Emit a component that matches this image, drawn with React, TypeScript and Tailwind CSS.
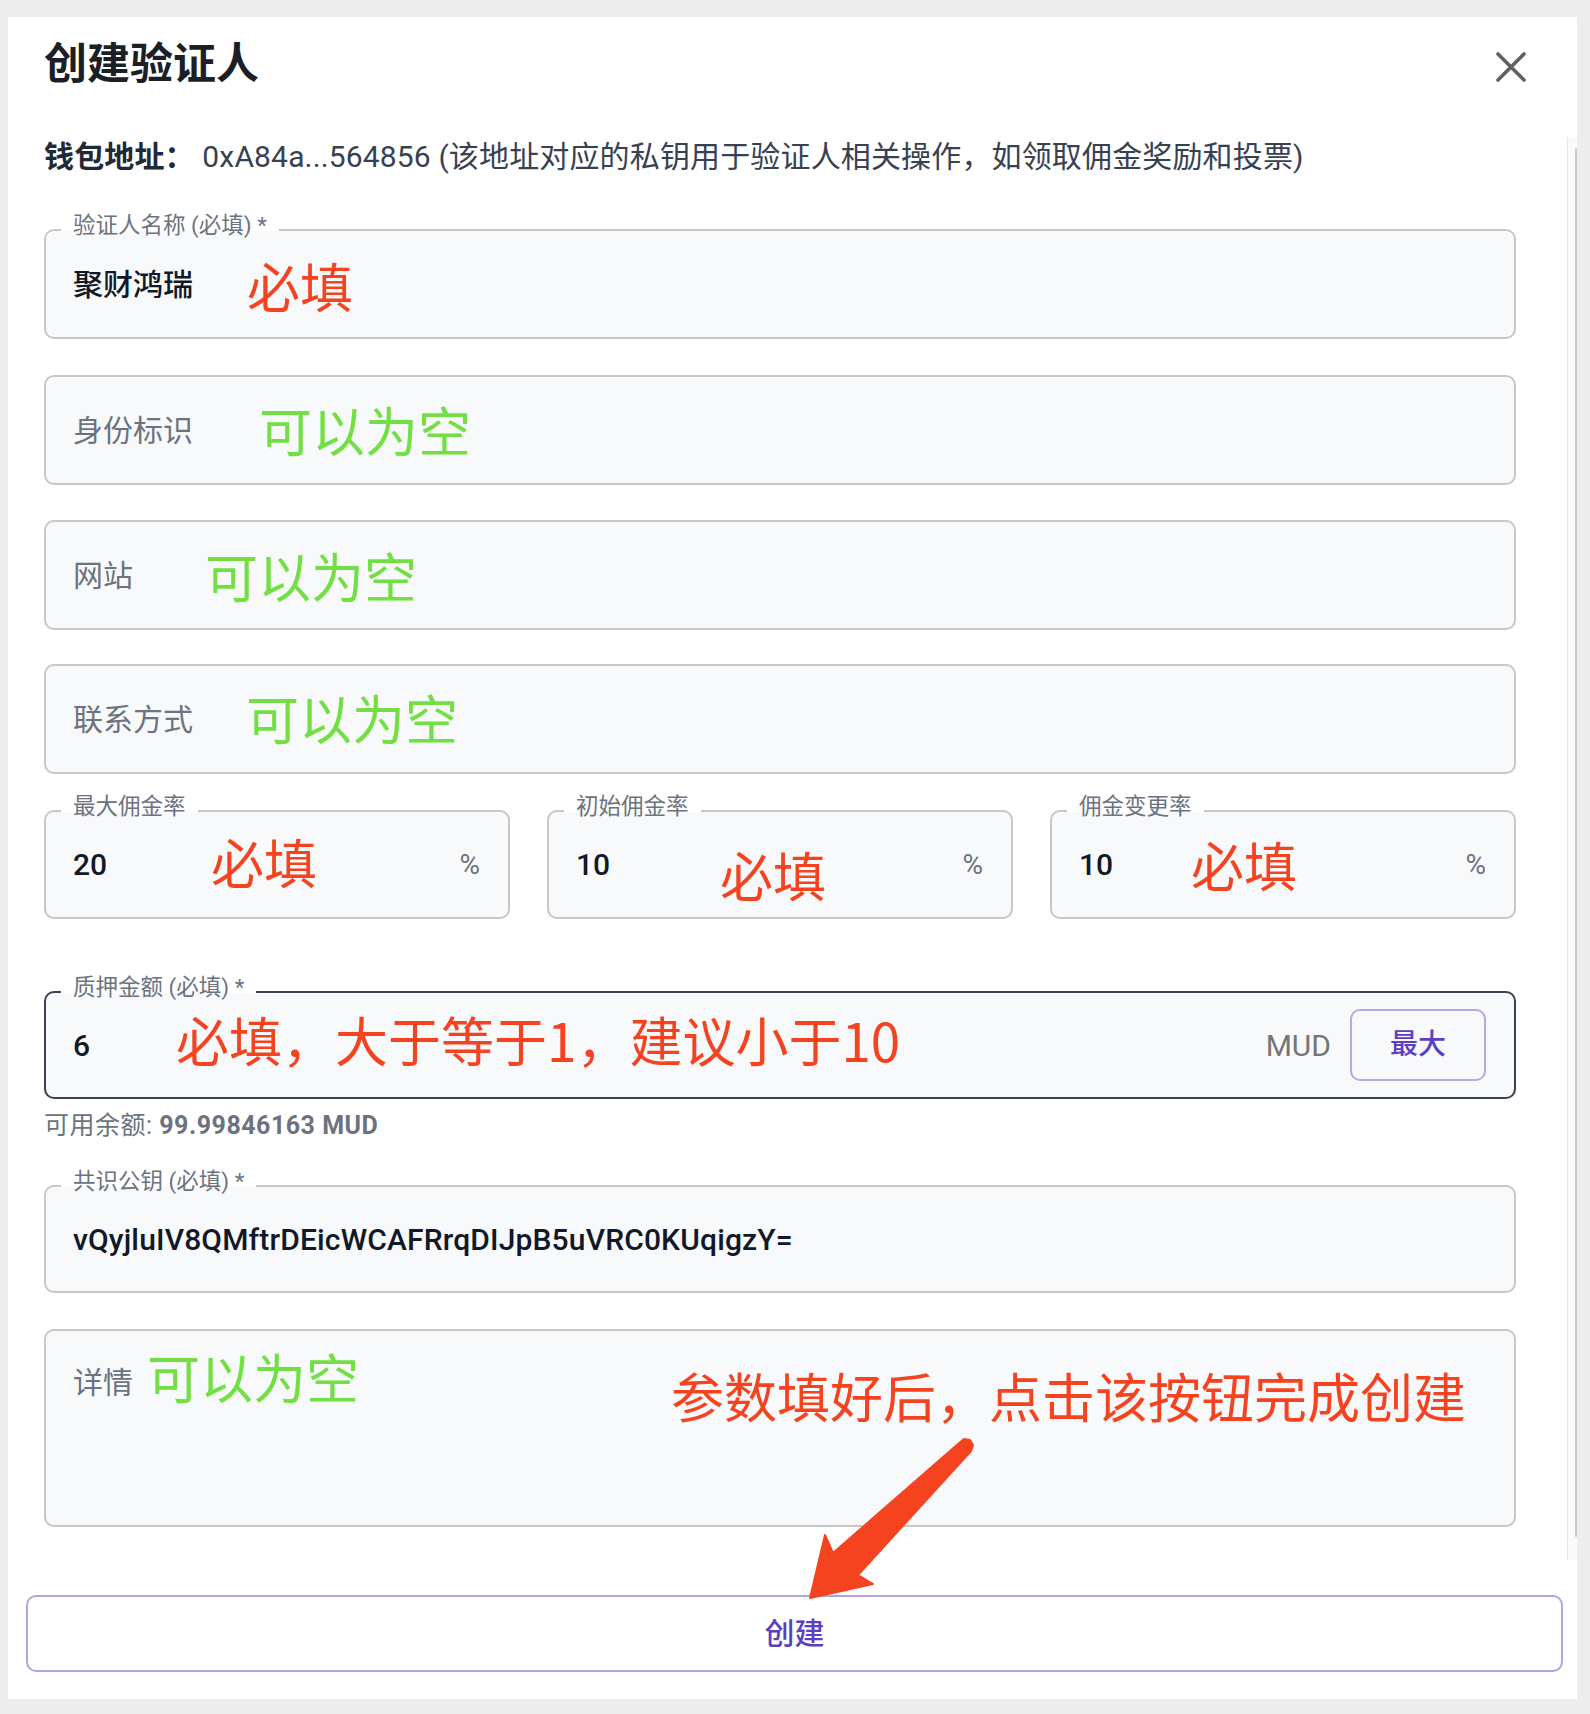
import { ReactNode } from 'react';
import clsx from 'clsx';

const font = "font-['Roboto','Noto_Sans_CJK_SC',sans-serif]";

function Field({
  label,
  dark,
  className,
  children,
}: {
  label?: string;
  dark?: boolean;
  className?: string;
  children?: ReactNode;
}) {
  return (
    <div
      className={clsx(
        'relative rounded-[10px] border-2 bg-[#f8f9fb]',
        dark ? 'border-[#3a4150]' : 'border-[#c6c7c9]',
        className
      )}
    >
      {label && (
        <span className="absolute left-[15px] top-[-2px] flex h-[2px] items-center bg-white px-[12px]">
          <span className="-translate-y-[5px] whitespace-nowrap text-[22.5px] leading-none text-[#6b7280]">
            {label}
          </span>
        </span>
      )}
      {children}
    </div>
  );
}

function Note({ text, green, className }: { text: string; green?: boolean; className: string }) {
  return (
    <span
      className={clsx(
        "pointer-events-none absolute whitespace-nowrap font-['Noto_Sans_CJK_SC',sans-serif] text-[53px] leading-none",
        green ? 'text-[#72e043]' : 'text-[#f6431f]',
        className
      )}
    >
      {text}
    </span>
  );
}

function RateField({ label, value, note }: { label: string; value: string; note: string }) {
  return (
    <Field label={label} className="flex h-[109px] items-center justify-between pl-[27px] pr-[28px]">
      <span className="text-[30px] font-medium text-[#111827]">{value}</span>
      <span className="text-[28px] text-[#6b7280]">%</span>
      <Note text="必填" className={note} />
    </Field>
  );
}

export default function App() {
  return (
    <div className={clsx('relative h-[1714px] w-[1590px] bg-[#ededed] pl-[8px] pt-[17px]', font)}>
      <div className="flex h-[1682px] w-[1569px] flex-col bg-white">
        {/* header */}
        <div className="flex h-[120px] shrink-0 items-start justify-between pl-[36px] pr-[50px] pt-[22px]">
          <h2 className="text-[43px] font-bold leading-[50px] text-[#1c1f26]">创建验证人</h2>
          <button className="mt-[12px] text-[#616161]">
            <svg width="32" height="32" viewBox="0 0 32 32" fill="none" stroke="currentColor" strokeWidth="3.6" strokeLinecap="round">
              <path d="M3 3 L29 29 M29 3 L3 29" />
            </svg>
          </button>
        </div>

        {/* body */}
        <div className="flex h-[1423px] shrink-0">
          <div className="flex-1 pl-[36px] pr-[51px] pt-[2px]">
            <p className="whitespace-nowrap text-[30px] leading-[36px] tracking-[0.15px] text-[#374151]">
              <span className="font-bold text-[#1f2937]">钱包地址：</span> 0xA84a...564856 (该地址对应的私钥用于验证人相关操作，如领取佣金奖励和投票)
            </p>

            <Field label="验证人名称 (必填) *" className="mt-[54px] flex h-[110px] items-center pl-[27px]">
              <span className="text-[30px] font-medium text-[#111827]">聚财鸿瑞</span>
              <Note text="必填" className="left-[201px] top-[28px]" />
            </Field>

            <Field className="mt-[36px] flex h-[110px] items-center pl-[27px]">
              <span className="text-[30px] text-[#6b7280]">身份标识</span>
              <Note text="可以为空" green className="left-[213px] top-[26px]" />
            </Field>

            <Field className="mt-[35px] flex h-[110px] items-center pl-[27px]">
              <span className="text-[30px] text-[#6b7280]">网站</span>
              <Note text="可以为空" green className="left-[159px] top-[27px]" />
            </Field>

            <Field className="mt-[34px] flex h-[110px] items-center pl-[27px]">
              <span className="text-[30px] text-[#6b7280]">联系方式</span>
              <Note text="可以为空" green className="left-[200px] top-[25px]" />
            </Field>

            <div className="mt-[36px] grid grid-cols-3 gap-[37px]">
              <RateField label="最大佣金率" value="20" note="left-[165px] top-[23px]" />
              <RateField label="初始佣金率" value="10" note="left-[171px] top-[36px]" />
              <RateField label="佣金变更率" value="10" note="left-[139px] top-[26px]" />
            </div>

            <Field label="质押金额 (必填) *" dark className="mt-[72px] flex h-[108px] items-center pl-[27px] pr-[28px]">
              <span className="text-[30px] font-medium text-[#111827]">6</span>
              <span className="flex-1" />
              <span className="mr-[19px] text-[30px] text-[#757575]">MUD</span>
              <button className="flex h-[72px] w-[136px] items-center justify-center rounded-[10px] border-2 border-[#b7a8e3] text-[28px] font-medium text-[#5b3fc2]">
                最大
              </button>
              <Note text="必填，大于等于1，建议小于10" className="left-[130px] top-[20px]" />
            </Field>

            <p className="mt-[12px] text-[25px] leading-[30px] tracking-[0.5px] text-[#6b7280]">
              可用余额: <span className="font-bold">99.99846163 MUD</span>
            </p>

            <Field label="共识公钥 (必填) *" className="mt-[44px] flex h-[108px] items-center pl-[27px]">
              <span className="text-[30px] font-medium tracking-[0.15px] text-[#111827]">vQyjluIV8QMftrDEicWCAFRrqDIJpB5uVRC0KUqigzY=</span>
            </Field>

            <Field className="mt-[36px] h-[198px] pl-[27px] pt-[30px]">
              <span className="text-[30px] leading-[43px] text-[#6b7280]">详情</span>
              <Note text="可以为空" green className="left-[101px] top-[19px]" />
              <Note text="参数填好后，点击该按钮完成创建" className="left-[625px] top-[38px]" />
            </Field>
          </div>

          {/* scrollbar track */}
          <div className="relative w-[10px] border-l border-[#e6e6e6] bg-[#fafafa]">
            <div className="absolute bottom-[23px] right-[0px] top-[11px] w-[2px] rounded bg-[#cbcbcb]" />
          </div>
        </div>

        {/* footer */}
        <div className="pl-[18px] pt-[35px]">
          <button className="flex h-[77px] w-[1537px] items-center justify-center rounded-[10px] border-2 border-[#b3a4e0] text-[30px] font-medium text-[#5b3fc2]">
            创建
          </button>
        </div>
      </div>

      {/* annotation arrow */}
      <svg className="pointer-events-none absolute left-[800px] top-[1430px]" width="180" height="180" viewBox="0 0 180 180">
        <polygon
          points="158,14 33,123 25,105 10,168 73,154 58,145 171,21 173,15 170,10 164,9"
          fill="#f6431f"
          stroke="#f6431f"
          strokeWidth="2"
          strokeLinejoin="round"
        />
      </svg>
    </div>
  );
}
